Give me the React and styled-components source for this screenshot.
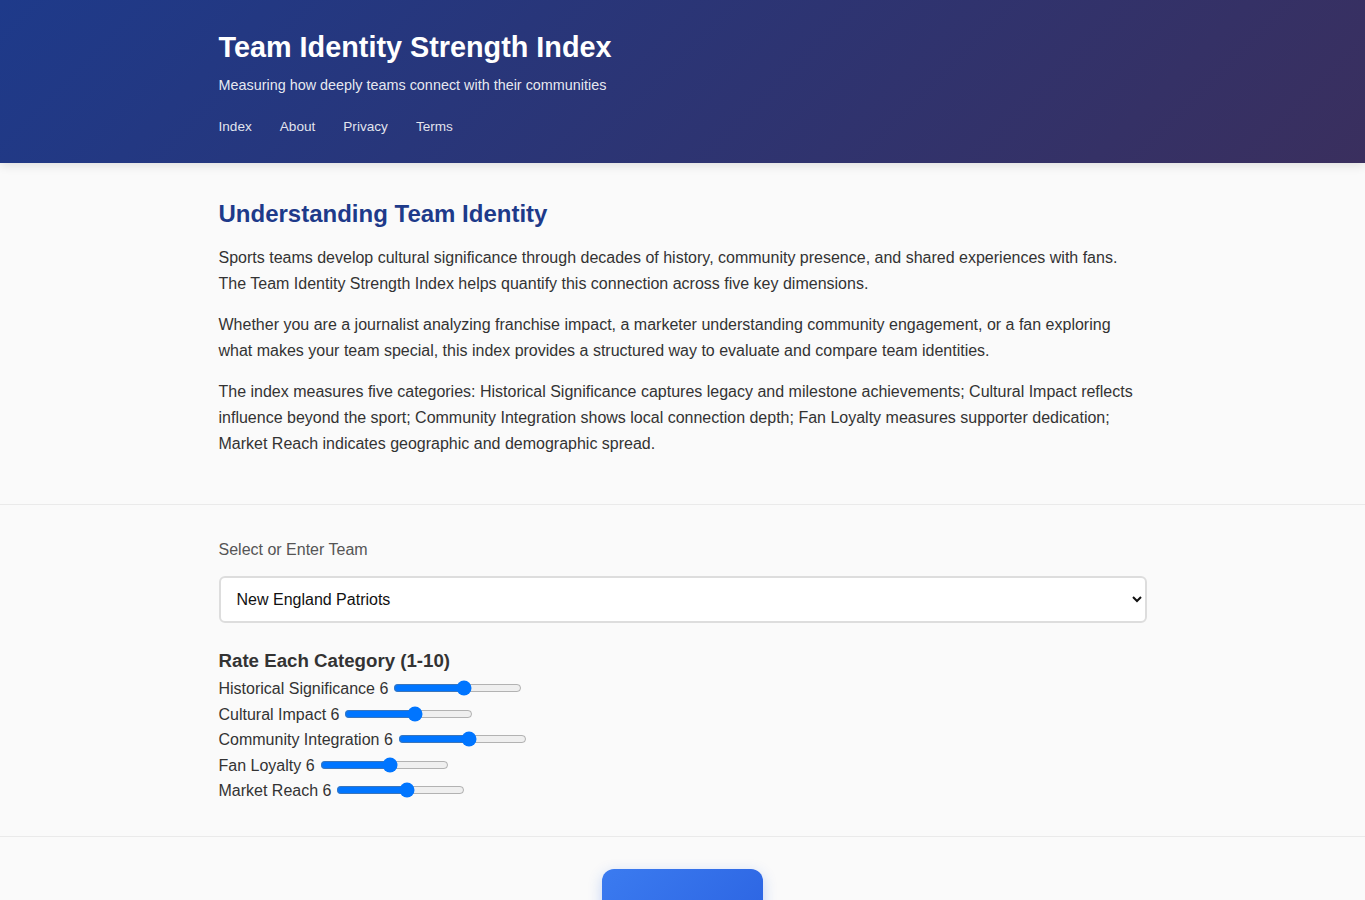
import React, { useState } from "react";
import styled, { createGlobalStyle } from "styled-components";

const Global = createGlobalStyle`
  * { box-sizing: border-box; }
  html, body { margin: 0; padding: 0; }
  body {
    background: #fafafa;
    color: #333;
    font-family: "Liberation Sans", Arial, sans-serif;
    font-size: 16px;
    line-height: 1.6;
  }
`;

const Header = styled.header`
  background: linear-gradient(135deg, #1e3a8a 0%, #3a2f5e 100%);
  color: #fff;
  padding: 30px 0 25px;
  box-shadow: 0 2px 10px rgba(0, 0, 0, 0.12);
`;

const Container = styled.div`
  max-width: 960px;
  margin: 0 auto;
  padding: 0 16px;
`;

const Title = styled.h1`
  margin: 0 0 8px;
  font-size: 28.8px;
  line-height: 1.2;
  font-weight: 700;
`;

const Subtitle = styled.p`
  margin: 0 0 19px;
  font-size: 14.4px;
  line-height: 24px;
  color: rgba(255, 255, 255, 0.9);
`;

const Nav = styled.nav`
  display: flex;
  gap: 28px;
`;

const NavLink = styled.a`
  color: rgba(255, 255, 255, 0.88);
  text-decoration: none;
  font-size: 13.6px;
  line-height: 22px;
`;

const Section = styled.section`
  border-bottom: ${(p) => (p.$last ? "none" : "1px solid #eaeaea")};
  padding: ${(p) => p.$pad || "32px 0"};
`;

const H2 = styled.h2`
  margin: 0 0 17px;
  font-size: 24px;
  line-height: 1.2;
  color: #1e3a8a;
  font-weight: 700;
`;

const P = styled.p`
  margin: 0 0 15px;
  line-height: 26px;
`;

const FieldLabel = styled.label`
  display: block;
  color: #555;
  margin-bottom: 13px;
`;

const Select = styled.select`
  display: block;
  width: 100%;
  font-family: inherit;
  font-size: 16px;
  line-height: normal;
  padding: 12px;
  border: 2px solid #ddd;
  border-radius: 6px;
  background: #fff;
  color: #111;
  margin-bottom: 27px;
`;

const H3 = styled.h3`
  margin: 0 0 4px;
  font-size: 18.7px;
  line-height: 1.2;
  font-weight: 700;
  color: #333;
`;

const Row = styled.div`
  line-height: 25.5px;
  height: 25.5px;
`;

const Range = styled.input`
  vertical-align: middle;
  margin: 0 0 0 5px;
  width: 129px;
  accent-color: #0075ff;
  position: relative;
  top: -2px;
`;

const ButtonWrap = styled.div`
  display: flex;
  justify-content: center;
`;

const Button = styled.button`
  width: 161px;
  padding: 36px 20px;
  border: none;
  border-radius: 12px;
  background: linear-gradient(135deg, #3b7bf0 0%, #2a61e0 100%);
  color: #fff;
  font-family: inherit;
  font-size: 16px;
  font-weight: 700;
  box-shadow: 0 4px 14px rgba(37, 99, 235, 0.25);
  cursor: pointer;
`;

const categories = [
  "Historical Significance",
  "Cultural Impact",
  "Community Integration",
  "Fan Loyalty",
  "Market Reach",
];

export default function App() {
  const [vals, setVals] = useState(categories.map(() => 6));
  return (
    <>
      <Global />
      <Header>
        <Container>
          <Title>Team Identity Strength Index</Title>
          <Subtitle>Measuring how deeply teams connect with their communities</Subtitle>
          <Nav>
            <NavLink href="#">Index</NavLink>
            <NavLink href="#">About</NavLink>
            <NavLink href="#">Privacy</NavLink>
            <NavLink href="#">Terms</NavLink>
          </Nav>
        </Container>
      </Header>
      <Section $pad="37px 0 32px">
        <Container>
          <H2>Understanding Team Identity</H2>
          <P>
            Sports teams develop cultural significance through decades of history, community presence, and shared
            experiences with fans. The Team Identity Strength Index helps quantify this connection across five key
            dimensions.
          </P>
          <P>
            Whether you are a journalist analyzing franchise impact, a marketer understanding community engagement, or a
            fan exploring what makes your team special, this index provides a structured way to evaluate and compare team
            identities.
          </P>
          <P>
            The index measures five categories: Historical Significance captures legacy and milestone achievements;
            Cultural Impact reflects influence beyond the sport; Community Integration shows local connection depth; Fan
            Loyalty measures supporter dedication; Market Reach indicates geographic and demographic spread.
          </P>
        </Container>
      </Section>
      <Section>
        <Container>
          <FieldLabel htmlFor="team">Select or Enter Team</FieldLabel>
          <Select id="team" defaultValue="ne">
            <option value="ne">New England Patriots</option>
            <option value="gb">Green Bay Packers</option>
            <option value="dal">Dallas Cowboys</option>
          </Select>
          <H3>Rate Each Category (1-10)</H3>
          {categories.map((c, i) => (
            <Row key={c}>
              <label>
                {c} {vals[i]}
                <Range
                  type="range"
                  min="1"
                  max="10"
                  value={vals[i]}
                  onChange={(e) => {
                    const n = [...vals];
                    n[i] = Number(e.target.value);
                    setVals(n);
                  }}
                />
              </label>
            </Row>
          ))}
        </Container>
      </Section>
      <Section $last>
        <ButtonWrap>
          <Button>Calculate Index</Button>
        </ButtonWrap>
      </Section>
    </>
  );
}
